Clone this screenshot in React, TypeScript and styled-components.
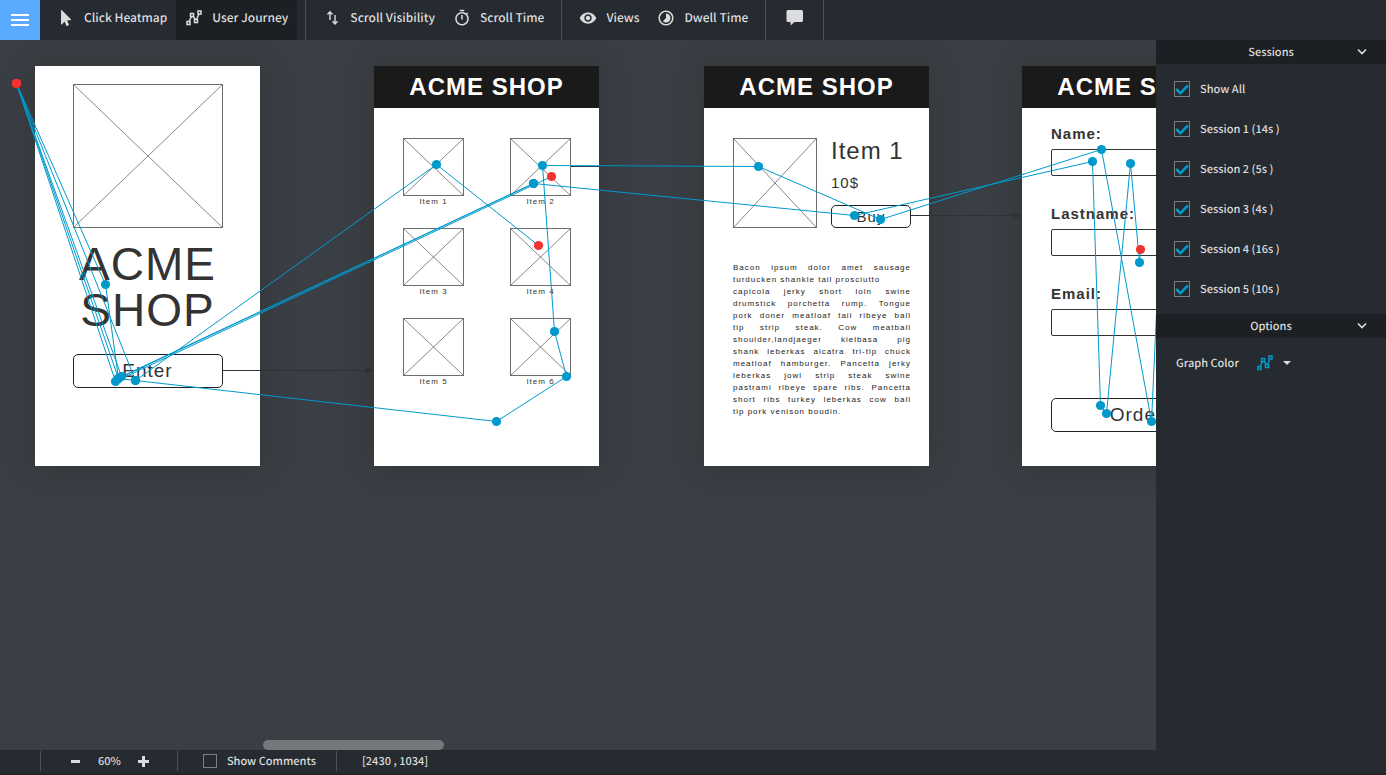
import React, { useState } from "react";
import styled, { createGlobalStyle } from "styled-components";
import { FaMousePointer } from "react-icons/fa";
import { MdOutlineTimer, MdTimelapse, MdVisibility } from "react-icons/md";

const uiFont = `"Noto Sans CJK JP", "Noto Sans", sans-serif`;
const mockFont = `"Liberation Sans", Arial, sans-serif`;

const color = {
  bar: "#262a31",
  barDark: "#1c2024",
  canvas: "#3a3e45",
  rule: "#4c5054",
  text: "#dcdcdc",
  accent: "#0099cc",
  stop: "#f03232",
  menu: "#5aabff",
  ink: "#333333",
};

const GlobalStyle = createGlobalStyle`
  *, *::before, *::after { box-sizing: border-box; }
  body {
    margin: 0;
    background: ${color.canvas};
    color: ${color.text};
    font-family: ${uiFont};
    font-size: 11px;
    font-weight: 500;
    text-rendering: geometricPrecision;
  }
  button, input { font: inherit; color: inherit; text-rendering: inherit; }
  h1, h2, h3, p, ul { margin: 0; padding: 0; }
`;

const Page = styled.div`
  display: flex;
  flex-direction: column;
  min-height: 100vh;
`;

/* ---------- top toolbar ---------- */

const Toolbar = styled.header`
  display: flex;
  height: 40px;
  background: ${color.bar};
`;

const MenuButton = styled.button`
  display: flex;
  flex-direction: column;
  justify-content: center;
  gap: 3px;
  width: 40px;
  padding: 0 11px;
  border: 0;
  background: ${color.menu};
`;

const MenuBar = styled.span`
  height: 2px;
  background: #ffffff;
`;

const ToolGroup = styled.nav<{ $wide?: boolean }>`
  display: flex;
  padding: 0 ${(p) => (p.$wide ? 11 : 8)}px;
  border-right: 1px solid ${color.rule};
`;

const ToolButton = styled.button<{ $active?: boolean }>`
  display: flex;
  align-items: center;
  gap: 10px;
  padding: 0 9px 4px 10px;
  border: 0;
  background: ${(p) => (p.$active ? color.barDark : "transparent")};
  font-size: 12px;
  line-height: 20px;
  white-space: nowrap;
`;

const IconSlot = styled.span`
  display: flex;
  align-items: center;
  justify-content: center;
  width: 16px;
  height: 18px;
  svg { flex: none; display: block; }
`;

/* ---------- canvas ---------- */

const Main = styled.main`
  display: flex;
  flex: 1;
`;

const Canvas = styled.section`
  position: relative;
  flex: 1;
  min-width: 0;
  min-height: 440px;
  overflow: hidden;
  background: ${color.canvas};
`;

const Overlay = styled.svg`
  position: absolute;
  inset: 0;
  width: 100%;
  height: 100%;
  pointer-events: none;
`;

const Artboard = styled.article<{ $x: number }>`
  position: absolute;
  top: 26px;
  left: ${(p) => p.$x}px;
  width: 225px;
  height: 400px;
  background: #ffffff;
  box-shadow: 0 0 24px rgba(50, 54, 50, 0.9);
  color: ${color.ink};
  font-family: ${mockFont};
  font-weight: 400;
  letter-spacing: 1px;
  text-rendering: auto;
`;

const ShopHeader = styled.h2`
  height: 42px;
  background: #1a1a1a;
  color: #ffffff;
  font-size: 24px;
  line-height: 42px;
  text-align: center;
`;

const Splash = styled.div`
  display: flex;
  flex-direction: column;
  align-items: center;
  padding-top: 18px;
`;

const SplashTitle = styled.h1`
  margin: 13px 0 21px;
  width: 150px;
  font-size: 46px;
  font-weight: 400;
  line-height: 46px;
  text-align: center;
`;

const MockButton = styled.button<{ $w: number; $small?: boolean }>`
  width: ${(p) => p.$w}px;
  height: ${(p) => (p.$small ? 23 : 34)}px;
  padding: 0;
  border: 1px solid #222222;
  border-radius: 5px;
  background: #ffffff;
  font-size: ${(p) => (p.$small ? 15 : 19)}px;
  letter-spacing: 1px;
  line-height: 20px;
`;

const Picture = styled.svg<{ $w: number; $h: number }>`
  display: block;
  flex: none;
  width: ${(p) => p.$w}px;
  height: ${(p) => p.$h}px;
  border: 1px solid #6e6e6e;
  line { stroke: #555555; stroke-width: 0.7; vector-effect: non-scaling-stroke; }
`;

const ItemGrid = styled.div`
  display: grid;
  grid-template-columns: 61px 61px;
  column-gap: 46px;
  row-gap: 20px;
  padding: 30px 29px;
`;

const Item = styled.figure`
  margin: 0;
`;

const Caption = styled.figcaption`
  font-size: 8px;
  line-height: 12px;
  text-align: center;
`;

const Product = styled.div`
  display: flex;
  gap: 14px;
  padding: 30px 18px 34px 29px;
`;

const ProductInfo = styled.div`
  display: flex;
  flex-direction: column;
  flex: 1;
`;

const ProductName = styled.h3`
  font-size: 24px;
  font-weight: 400;
  line-height: 26px;
`;

const Price = styled.p`
  flex: 1;
  padding-top: 9px;
  font-size: 15px;
  line-height: 20px;
`;

const Description = styled.p`
  padding: 0 18px 0 29px;
  color: #222222;
  font-size: 8px;
  line-height: 12px;
`;

const DescriptionLine = styled.span<{ $ragged?: boolean }>`
  display: block;
  white-space: nowrap;
  text-align-last: ${(p) => (p.$ragged ? "left" : "justify")};
`;

const OrderForm = styled.form`
  display: flex;
  flex-direction: column;
  gap: 28px;
  padding: 16px 25px 0 29px;
`;

const Field = styled.label`
  display: flex;
  flex-direction: column;
  gap: 5px;
  font-size: 15px;
  font-weight: 700;
  line-height: 20px;
`;

const FieldInput = styled.input`
  width: 100%;
  height: 27px;
  border: 1px solid ${color.ink};
  border-radius: 2px;
  background: #ffffff;
`;

const FormFooter = styled.div`
  padding-top: 34px;
`;

const ScrollThumb = styled.div`
  position: absolute;
  bottom: 0;
  left: 263px;
  width: 181px;
  height: 10px;
  border-radius: 5px;
  background: #74787b;
`;

/* ---------- side panel ---------- */

const Panel = styled.aside`
  flex: none;
  width: 230px;
  background: ${color.bar};
`;

const PanelHeading = styled.button`
  display: grid;
  grid-template-columns: 1fr auto 1fr;
  align-items: center;
  width: 100%;
  height: 24px;
  padding: 0 18px;
  border: 0;
  background: ${color.barDark};
  line-height: 20px;
  svg { justify-self: end; }
`;

const SessionList = styled.ul`
  list-style: none;
  padding: 5px 18px;
`;

const CheckLabel = styled.label<{ $h: number }>`
  display: flex;
  align-items: center;
  gap: 10px;
  height: ${(p) => p.$h}px;
  line-height: 20px;
`;

const CheckSlot = styled.span<{ $size: number }>`
  display: grid;
  width: ${(p) => p.$size}px;
  height: ${(p) => p.$size}px;
  > * { grid-area: 1 / 1; }
  svg { pointer-events: none; }
`;

const CheckInput = styled.input`
  appearance: none;
  width: 100%;
  height: 100%;
  margin: 0;
  border: 1px solid #7c7e80;
`;

const OptionRow = styled.div`
  display: flex;
  align-items: center;
  gap: 18px;
  height: 50px;
  padding: 0 20px;
  line-height: 20px;
`;

const ColorButton = styled.button`
  display: flex;
  align-items: center;
  gap: 10px;
  padding: 0;
  border: 0;
  background: transparent;
`;

/* ---------- status bar ---------- */

const StatusBar = styled.footer`
  display: flex;
  height: 25px;
  padding-left: 40px;
  background: ${color.bar};
  border-bottom: 2px solid #202429;
`;

const StatusGroup = styled.div`
  display: flex;
  align-items: center;
  height: 20px;
  margin-top: 1px;
  padding: 0 20px 0 25px;
  border-left: 1px solid ${color.rule};
  line-height: 20px;
`;

const ZoomGroup = styled(StatusGroup)`
  gap: 17px;
  padding: 0 28px 0 29px;
`;

const ZoomButton = styled.button`
  display: flex;
  padding: 0;
  border: 0;
  background: transparent;
`;

/* ---------- drawings ---------- */

function GraphIcon({ stroke }: { stroke: string }) {
  return (
    <svg width="16" height="16" viewBox="0 0 16 16" fill="none" stroke={stroke} strokeWidth="1.5">
      <rect x="1" y="11.5" width="3" height="3" />
      <rect x="4.5" y="3.5" width="3" height="3" />
      <rect x="8.5" y="9.5" width="3" height="3" />
      <rect x="12" y="1" width="3" height="3" />
      <path d="M3 11.5 5.5 6.5M7 6.5 9.5 9.5M10.5 9.5 13 4" />
    </svg>
  );
}

function ScrollArrowsIcon() {
  return (
    <svg width="16" height="18" viewBox="0 0 16 18" fill="none" stroke={color.text} strokeWidth="1.4">
      <path d="M6 11V3M3.5 5.5 6 2.7 8.5 5.5M11 6v9M8.5 12.3l2.5 2.7 2.5-2.7" />
    </svg>
  );
}

function SpeechIcon() {
  return (
    <svg width="18" height="16" viewBox="0 0 18 16" fill={color.text}>
      <path d="M2 0h13.5a1.5 1.5 0 0 1 1.5 1.5v9a1.5 1.5 0 0 1-1.5 1.5H8.5L4.500 15.500V12H2A1.5 1.5 0 0 1 .5 10.500v-9A1.5 1.5 0 0 1 2 0z" />
    </svg>
  );
}

function Chevron() {
  return (
    <svg width="12" height="8" viewBox="0 0 12 8" fill="none" stroke={color.text} strokeWidth="1.6">
      <path d="M2 1.5 6 5.5 10 1.5" />
    </svg>
  );
}

function Placeholder({ w, h }: { w: number; h: number }) {
  return (
    <Picture $w={w} $h={h} viewBox="0 0 100 100" preserveAspectRatio="none" aria-hidden="true">
      <line x1="0" y1="0" x2="100" y2="100" />
      <line x1="100" y1="0" x2="0" y2="100" />
    </Picture>
  );
}

type CheckProps = {
  label: string;
  checked: boolean;
  onChange: () => void;
  size?: number;
  height?: number;
};

function Check({ label, checked, onChange, size = 16, height = 40 }: CheckProps) {
  return (
    <CheckLabel $h={height}>
      <CheckSlot $size={size}>
        <CheckInput type="checkbox" checked={checked} onChange={onChange} />
        {checked && (
          <svg width="16" height="16" viewBox="0 0 16 16" fill="none" stroke={color.accent} strokeWidth="2.6">
            <path d="M2.2 8 6.3 12.2 14 4.5" />
          </svg>
        )}
      </CheckSlot>
      {label}
    </CheckLabel>
  );
}

/* ---------- data ---------- */

type Point = [number, number];

// Canvas coordinates of each recorded visit.
const journeys: Point[][] = [
  [[16, 43], [105, 244], [118, 338], [135, 340], [496, 381], [566, 336], [554, 291], [542, 125], [758, 126], [880, 179], [1101, 109], [1151, 381], [1164, 100]],
  [[16, 43], [135, 340], [436, 124], [538, 205]],
  [[16, 43], [115, 341], [551, 136]],
  [[16, 43], [121, 336], [533, 143], [854, 175], [1092, 121], [1100, 365], [1106, 373], [1130, 123], [1139, 222], [1140, 209]],
  [[16, 43], [118, 338], [533, 143]],
];

const stops: Point[] = [[16, 43], [538, 205], [551, 136], [1140, 209]];
const isStop = ([x, y]: Point) => stops.some(([sx, sy]) => sx === x && sy === y);

const sessions = ["Session 1 (14s )", "Session 2 (5s )", "Session 3 (4s )", "Session 4 (16s )", "Session 5 (10s )"];

const description: { text: string; ragged?: boolean }[] = [
  { text: "Bacon ipsum dolor amet sausage" },
  { text: "turducken shankle tail prosciutto", ragged: true },
  { text: "capicola jerky short loin swine" },
  { text: "drumstick porchetta rump. Tongue" },
  { text: "pork doner meatloaf tail ribeye ball" },
  { text: "tip strip steak. Cow meatball" },
  { text: "shoulder,landjaeger kielbasa pig" },
  { text: "shank leberkas alcatra tri-tip chuck" },
  { text: "meatloaf hamburger. Pancetta jerky" },
  { text: "leberkas jowl strip steak swine" },
  { text: "pastrami ribeye spare ribs. Pancetta" },
  { text: "short ribs turkey leberkas cow ball" },
  { text: "tip pork venison boudin.", ragged: true },
];

function Connectors() {
  return (
    <Overlay aria-hidden="true" stroke="#2f3234" fill="#2f3234">
      <path d="M223 330.5H368M571 126.5H698M911 175.5H1015" />
      <path stroke="none" d="M366 327l7 3.5-7 3.5zM1014 172l7 3.5-7 3.5z" />
    </Overlay>
  );
}

function JourneyOverlay({ visible }: { visible: boolean[] }) {
  const shown = journeys.filter((_, i) => visible[i]);
  return (
    <Overlay role="img" aria-label="User journey graph">
      <g transform="translate(0.5 0.5)">
        {shown.map((points, i) => (
          <polyline key={i} points={points.map((p) => p.join(",")).join(" ")} fill="none" stroke={color.accent} />
        ))}
        {shown.flat().map((p, i) => (
          <circle key={i} cx={p[0]} cy={p[1]} r="4.6" fill={isStop(p) ? color.stop : color.accent} />
        ))}
      </g>
    </Overlay>
  );
}

export default function App() {
  const [visible, setVisible] = useState<boolean[]>(sessions.map(() => true));
  const [comments, setComments] = useState(false);
  const all = visible.every(Boolean);
  const toggle = (i: number) => setVisible(visible.map((v, n) => (n === i ? !v : v)));

  return (
    <Page>
      <GlobalStyle />
      <Toolbar>
        <MenuButton aria-label="Menu">
          <MenuBar />
          <MenuBar />
          <MenuBar />
        </MenuButton>
        <ToolGroup>
          <ToolButton><IconSlot><FaMousePointer size={16} /></IconSlot>Click Heatmap</ToolButton>
          <ToolButton $active><IconSlot><GraphIcon stroke={color.text} /></IconSlot>User Journey</ToolButton>
        </ToolGroup>
        <ToolGroup>
          <ToolButton><IconSlot><ScrollArrowsIcon /></IconSlot>Scroll Visibility</ToolButton>
          <ToolButton><IconSlot><MdOutlineTimer size={18} /></IconSlot>Scroll Time</ToolButton>
        </ToolGroup>
        <ToolGroup>
          <ToolButton><IconSlot><MdVisibility size={18} /></IconSlot>Views</ToolButton>
          <ToolButton><IconSlot><MdTimelapse size={18} /></IconSlot>Dwell Time</ToolButton>
        </ToolGroup>
        <ToolGroup $wide>
          <ToolButton aria-label="Comments"><IconSlot><SpeechIcon /></IconSlot></ToolButton>
        </ToolGroup>
      </Toolbar>

      <Main>
        <Canvas>
          <Artboard $x={35}>
            <Splash>
              <Placeholder w={150} h={144} />
              <SplashTitle>ACME SHOP</SplashTitle>
              <MockButton $w={150}>Enter</MockButton>
            </Splash>
          </Artboard>

          <Artboard $x={374}>
            <ShopHeader>ACME SHOP</ShopHeader>
            <ItemGrid>
              {[1, 2, 3, 4, 5, 6].map((n) => (
                <Item key={n}>
                  <Placeholder w={61} h={58} />
                  <Caption>Item {n}</Caption>
                </Item>
              ))}
            </ItemGrid>
          </Artboard>

          <Artboard $x={704}>
            <ShopHeader>ACME SHOP</ShopHeader>
            <Product>
              <Placeholder w={84} h={90} />
              <ProductInfo>
                <ProductName>Item 1</ProductName>
                <Price>10$</Price>
                <MockButton $w={80} $small>Buy</MockButton>
              </ProductInfo>
            </Product>
            <Description>
              {description.map((line) => (
                <DescriptionLine key={line.text} $ragged={line.ragged}>{line.text}</DescriptionLine>
              ))}
            </Description>
          </Artboard>

          <Artboard $x={1022}>
            <ShopHeader>ACME SHOP</ShopHeader>
            <OrderForm>
              {["Name:", "Lastname:", "Email:"].map((label) => (
                <Field key={label}>
                  {label}
                  <FieldInput type="text" />
                </Field>
              ))}
              <FormFooter>
                <MockButton type="button" $w={171}>Order</MockButton>
              </FormFooter>
            </OrderForm>
          </Artboard>

          <Connectors />
          <JourneyOverlay visible={visible} />
          <ScrollThumb />
        </Canvas>

        <Panel>
          <PanelHeading><span />Sessions<Chevron /></PanelHeading>
          <SessionList>
            <li>
              <Check label="Show All" checked={all} onChange={() => setVisible(sessions.map(() => !all))} />
            </li>
            {sessions.map((label, i) => (
              <li key={label}>
                <Check label={label} checked={visible[i]} onChange={() => toggle(i)} />
              </li>
            ))}
          </SessionList>
          <PanelHeading><span />Options<Chevron /></PanelHeading>
          <OptionRow>
            Graph Color
            <ColorButton aria-label="Graph Color">
              <GraphIcon stroke={color.accent} />
              <svg width="8" height="4" viewBox="0 0 8 4" fill={color.text}><path d="M0 0h8L4 4z" /></svg>
            </ColorButton>
          </OptionRow>
        </Panel>
      </Main>

      <StatusBar>
        <ZoomGroup>
          <ZoomButton aria-label="Zoom out">
            <svg width="11" height="11" viewBox="0 0 11 11" fill={color.text}><path d="M1 4h9v3H1z" /></svg>
          </ZoomButton>
          60%
          <ZoomButton aria-label="Zoom in">
            <svg width="11" height="11" viewBox="0 0 11 11" fill={color.text}><path d="M4 0h3v4h4v3H7v4H4V7H0V4h4z" /></svg>
          </ZoomButton>
        </ZoomGroup>
        <StatusGroup>
          <Check label="Show Comments" checked={comments} onChange={() => setComments(!comments)} size={14} height={20} />
        </StatusGroup>
        <StatusGroup>[2430 , 1034]</StatusGroup>
      </StatusBar>
    </Page>
  );
}
